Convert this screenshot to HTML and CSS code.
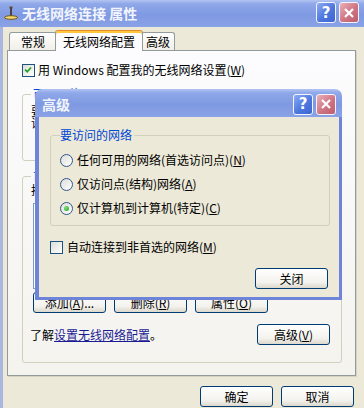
FILE: index.html
```html
<!DOCTYPE html>
<html lang="zh-CN">
<head>
    <meta charset="UTF-8">
    <meta name="viewport" content="width=device-width, initial-scale=1.0">
    <title>无线网络连接 属性</title>
    <link rel="stylesheet" href="styles.css">
</head>
<body>
<div class="window">
    <div class="titlebar">
        <svg class="title-icon" viewBox="0 0 16 16">
            <line x1="8" y1="2" x2="8" y2="11" stroke="#3b2f1c" stroke-width="1.6"/>
            <ellipse cx="8" cy="12.5" rx="6.5" ry="1.8" fill="#f3d76a" stroke="#6e5518" stroke-width="1"/>
            <rect x="6.5" y="1.5" width="3" height="2" fill="#5a4a2a"/>
        </svg>
        <span class="title">无线网络连接 属性</span>
        <span class="cap-btn help">?</span>
        <span class="cap-btn close">
            <svg viewBox="0 0 12 12" width="12" height="12"><path d="M2 2 L10 10 M10 2 L2 10" stroke="#fff" stroke-width="2.2"/></svg>
        </span>
    </div>

    <div class="client">
        <div class="tabs">
            <div class="tab tab-general">常规</div>
            <div class="tab tab-wireless active">无线网络配置</div>
            <div class="tab tab-advanced">高级</div>
        </div>

        <div class="tabpage">
            <div class="check-row">
                <span class="checkbox">
                    <svg viewBox="0 0 13 13" width="11" height="11"><polyline points="2.5,5.5 5,8 9.5,3" fill="none" stroke="#21a121" stroke-width="2"/></svg>
                </span>
                <span>用 Windows 配置我的无线网络设置(<u>W</u>)</span>
            </div>

            <fieldset class="group group-avail">
                <legend>可用网络(<u>N</u>):</legend>
                <p class="group-text">要连接、断开区域内的无线网络或查找有关更多信息，请单击下面的按钮。</p>
            </fieldset>

            <fieldset class="group group-pref">
                <legend>首选网络(<u>P</u>):</legend>
                <p class="pref-text">按下面的顺序自动连接到一个可用网络:</p>
                <div class="listbox"></div>
                <div class="btn-row">
                    <button class="btn">添加(<u>A</u>)...</button>
                    <button class="btn">删除(<u>R</u>)</button>
                    <button class="btn">属性(<u>O</u>)</button>
                </div>
                <div class="learn-row">
                    <span>了解<a href="#" class="link">设置无线网络配置</a>。</span>
                    <button class="btn">高级(<u>V</u>)</button>
                </div>
            </fieldset>
        </div>

        <div class="footer">
            <button class="btn">确定</button>
            <button class="btn">取消</button>
        </div>
    </div>

    <div class="dialog">
        <div class="dialog-title">
            <span class="title">高级</span>
            <span class="cap-btn help">?</span>
            <span class="cap-btn close">
                <svg viewBox="0 0 12 12" width="12" height="12"><path d="M2 2 L10 10 M10 2 L2 10" stroke="#fff" stroke-width="2.2"/></svg>
            </span>
        </div>
        <div class="dialog-body">
            <fieldset class="group group-access">
                <legend>要访问的网络</legend>
                <div class="radio-list">
                    <div class="radio-row"><span class="radio"></span><span>任何可用的网络(首选访问点)(<u>N</u>)</span></div>
                    <div class="radio-row"><span class="radio"></span><span>仅访问点(结构)网络(<u>A</u>)</span></div>
                    <div class="radio-row"><span class="radio checked"></span><span>仅计算机到计算机(特定)(<u>C</u>)</span></div>
                </div>
            </fieldset>
            <div class="check-row dialog-check">
                <span class="checkbox"></span>
                <span>自动连接到非首选的网络(<u>M</u>)</span>
            </div>
            <button class="btn close-btn">关闭</button>
        </div>
    </div>
</div>
</body>
</html>
```

FILE: styles.css
```css
* {
    box-sizing: border-box;
}

body {
    margin: 0;
    background: #ece9d8;
    font-family: "Noto Sans CJK SC", sans-serif;
    font-size: 12px;
    color: #000;
}

p {
    margin: 0;
}

.window {
    position: relative;
    width: 364px;
    height: 408px;
    overflow: hidden;
    background: #ece9d8;
}

/* title bars */
.titlebar,
.dialog-title {
    display: flex;
    align-items: center;
    background: linear-gradient(#b3c4f1, #8fa8e9 14%, #7f99e2 55%, #8aa2e6);
}

.titlebar {
    height: 27px;
    padding: 0 5px 2px 3px;
}

.title-icon {
    width: 16px;
    height: 16px;
    margin-right: 3px;
}

.title {
    flex: 1;
    color: #f2f5fd;
    font-size: 14px;
    font-weight: bold;
    line-height: 16px;
}

.cap-btn {
    width: 20px;
    height: 21px;
    margin-left: 2px;
    border: 1px solid #f3f5fc;
    border-radius: 3px;
    display: flex;
    align-items: center;
    justify-content: center;
    color: #fff;
    font: bold 15px "DejaVu Sans", sans-serif;
}

.help {
    background: linear-gradient(135deg, #8eabf3, #4d77de 55%, #3e66d2);
}

.close {
    margin-left: 3px;
    background: linear-gradient(135deg, #eab0b8, #cf7483 55%, #bb5e6e);
}

/* main window */
.client {
    height: 381px;
    border-left: 3px solid #a9b6e0;
    padding-top: 3px;
}

.tabs {
    display: flex;
    align-items: flex-end;
    height: 20px;
    margin-left: 6px;
}

.tab {
    height: 18px;
    border: 1px solid #919b9c;
    border-bottom: none;
    border-radius: 3px 3px 0 0;
    background: linear-gradient(#fefefe, #f1efe6);
    text-align: center;
    line-height: 17px;
}

.tab-general {
    width: 48px;
}

.tab-wireless {
    width: 88px;
}

.tab-advanced {
    width: 34px;
}

.tab.active {
    position: relative;
    z-index: 1;
    height: 21px;
    margin: 0 -2px -1px;
    padding-top: 3px;
    line-height: 16px;
    background: #fcfcfe;
    border-top-color: #e68b2c;
    box-shadow: inset 0 2px 0 #ffc73c;
}

.tabpage {
    width: 349px;
    height: 326px;
    margin-left: 4px;
    border: 1px solid #919b9c;
    background: linear-gradient(#fcfcfe, #f4f3ee);
    box-shadow: 1px 1px 0 #d6d3c4;
    display: flex;
    flex-direction: column;
}

.check-row {
    display: flex;
    align-items: center;
    gap: 3px;
    height: 14px;
    line-height: 14px;
    margin: 12px 0 0 14px;
}

.checkbox {
    width: 13px;
    height: 13px;
    border: 1px solid #1c5180;
    background: linear-gradient(135deg, #dcdcd7, #fff);
    display: flex;
    align-items: center;
    justify-content: center;
}

.group {
    margin: 0;
    padding: 0 11px 0 8px;
    border: 1px solid #d0d0bf;
    border-radius: 3px;
    min-width: 0;
}

.group legend {
    padding: 0 2px;
    color: #0046d5;
    line-height: 14px;
}

.group-avail {
    width: 320px;
    height: 74px;
    margin: 10px 0 0 14px;
}

.group-text {
    margin-top: 4px;
    line-height: 12px;
}

.group-pref {
    width: 320px;
    height: 194px;
    margin: 8px 0 0 14px;
}

.pref-text {
    line-height: 14px;
}

.listbox {
    width: 230px;
    height: 86px;
    margin: 6px 0 0 2px;
    border: 1px solid #7f9db9;
    background: #fff;
}

.btn-row {
    display: flex;
    gap: 8px;
    margin: 3px 0 0 2px;
}

.learn-row {
    display: flex;
    align-items: center;
    justify-content: space-between;
    margin: 11px 0 0 -1px;
}

.link {
    color: #1b1b94;
    text-decoration: underline;
}

.btn {
    width: 73px;
    height: 21px;
    padding: 0;
    border: 1px solid #003c74;
    border-radius: 3px;
    background: linear-gradient(#fff, #f3f2ed 70%, #dcd8cc);
    font: inherit;
    color: #000;
}

.footer {
    display: flex;
    justify-content: flex-end;
    gap: 8px;
    padding: 10px 10px 0 0;
}

/* the dialog window on top */
.dialog {
    position: absolute;
    left: 35px;
    top: 89px;
    z-index: 2;
    width: 307px;
    height: 211px;
    display: flex;
    flex-direction: column;
}

.dialog-title {
    height: 28px;
    padding: 2px 6px 0 7px;
    border-radius: 7px 7px 0 0;
}

.dialog-body {
    flex: 1;
    display: flex;
    flex-direction: column;
    background: #ece9d8;
    border: 3px solid #6d84d8;
    border-left-width: 4px;
    border-top: none;
}

.group-access {
    width: 280px;
    height: 98px;
    margin: 11px 0 0 11px;
    padding: 0 6px 0 9px;
}

.group-access legend {
    padding: 0 2px 0 0;
}

.radio-list {
    display: flex;
    flex-direction: column;
    gap: 10px;
    margin-top: 11px;
}

.radio-row {
    display: flex;
    align-items: center;
    gap: 4px;
    height: 14px;
    line-height: 14px;
}

.radio {
    width: 13px;
    height: 13px;
    border: 1px solid #2c5a8c;
    border-radius: 50%;
    background: linear-gradient(135deg, #dcdcd7, #fff);
    display: flex;
    align-items: center;
    justify-content: center;
}

.radio.checked::after {
    content: "";
    width: 5px;
    height: 5px;
    border-radius: 50%;
    background: radial-gradient(circle at 35% 35%, #7ee07a, #21a121);
}

.dialog-check {
    margin: 14px 0 0 11px;
    gap: 4px;
}

.close-btn {
    align-self: flex-end;
    margin: 14px 11px 0 0;
}
```
